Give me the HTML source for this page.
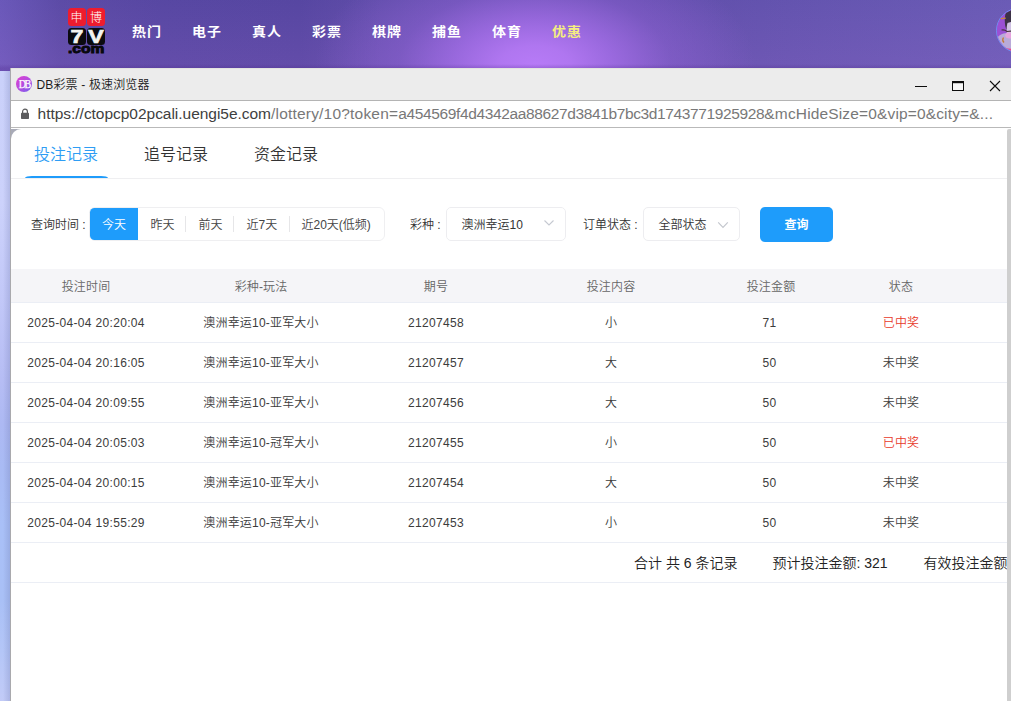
<!DOCTYPE html>
<html lang="zh-CN">
<head>
<meta charset="utf-8">
<title>DB彩票 - 极速浏览器</title>
<style>
*{box-sizing:border-box;margin:0;padding:0}
html,body{width:1011px;height:701px;overflow:hidden;background:#fff}
body{position:relative;font-family:"Liberation Sans","Noto Sans CJK SC",sans-serif;color:#333;font-size:12px;font-weight:350}
.abs{position:absolute;white-space:nowrap}
/* ---------- top site header ---------- */
#hdr{position:absolute;left:0;top:0;width:1011px;height:71px;overflow:hidden;
 background:
  linear-gradient(0deg,rgba(70,30,130,.22) 0px,rgba(70,30,130,.22) 3px,rgba(70,30,130,0) 7px),
  radial-gradient(ellipse 220px 125px at 535px 66px,rgba(183,123,247,1) 0%,rgba(181,121,245,.93) 16%,rgba(172,114,240,.72) 36%,rgba(155,104,226,.38) 62%,rgba(140,95,210,0) 100%),
  linear-gradient(180deg,rgba(20,20,120,.05) 0%,rgba(150,95,200,.16) 100%),
  linear-gradient(90deg,#6f5cbd 0px,#604ea9 60px,#5b4aa5 160px,#5a49a4 300px,#6450ac 380px,#6550ad 640px,#6756b1 760px,#6f5fb9 1011px);}
#hdr .nav{position:absolute;transform:scaleY(.9);top:21px;height:20px;line-height:20px;font-size:14px;font-weight:bold;color:#fff;white-space:nowrap;letter-spacing:1px}
#logo{position:absolute;left:67px;top:8px;width:39px;height:46px}
#logo .r{position:absolute;top:0;width:18px;height:18px;border-radius:3.5px;background:#ee1c2e;color:#fff;font-size:12px;line-height:20.5px;text-align:center;font-weight:300}
#logo .k{position:absolute;top:19.5px;width:18px;height:17.5px;border-radius:3.5px;background:#0b0b10;overflow:hidden}
#logo .k span{display:block;color:#f4f4f0;font-size:19px;line-height:17.5px;text-align:center;font-weight:bold;transform:scaleX(1.22);-webkit-text-stroke:.7px #f4f4f0}
#logo .c{position:absolute;left:1px;top:34px;width:31px;height:13px;font-size:13px;line-height:13px;font-weight:bold;color:#08080c;transform:scaleX(1.2);transform-origin:0 50%;-webkit-text-stroke:.9px #08080c}
#avatar{position:absolute;left:996px;top:8px;width:45px;height:45px;border-radius:50%;border:1px solid #6f8df2;overflow:hidden;
 background:#a254da}
/* ---------- left strip of underlying page ---------- */
#strip{position:absolute;left:0;top:71px;width:10px;height:630px;
 background:linear-gradient(180deg,#cad1fa 0%,#ccd2fb 21%,#c2c8f8 36%,#b6bdf4 49%,#adb9f3 56%,#a9bbf4 63%,#a9c0f7 72%,#a9c0f6 84%,#b4c6f7 92%,#c2cbf7 100%)}
#strip:after{content:"";position:absolute;right:0;top:0;width:7px;height:100%;background:linear-gradient(90deg,rgba(100,110,170,0),rgba(100,110,165,.24))}
/* ---------- popup window chrome ---------- */
#win{position:absolute;left:10px;top:68px;width:1001px;height:633px;background:#fff;overflow:hidden;border-left:1px solid #a9a9ad}
#tbar{position:absolute;left:0;top:0;width:1000px;height:32px;background:#ececec}
#tbar:before{content:"";position:absolute;left:0;top:0;width:100%;height:1px;background:#e4e4e0}
#tbar .ttl{position:absolute;left:25.5px;top:8px;height:18px;line-height:18px;font-size:12px;color:#1c1c1c;letter-spacing:.15px;white-space:nowrap}
#fav{position:absolute;left:5px;top:8px;width:16px;height:16px;border-radius:50%;
 background:linear-gradient(135deg,#e23fd0 0%,#b44de0 50%,#6f62ee 100%);overflow:hidden}
#fav span{position:absolute;left:-1.4px;top:0;width:20px;display:block;color:#fff;font-family:"Liberation Serif",serif;font-size:12px;font-weight:normal;line-height:16.5px;text-align:center;letter-spacing:-1.8px;text-indent:-1.8px;transform:scaleX(.84);-webkit-text-stroke:.25px #fff}
#ubar{position:absolute;left:0;top:32px;width:1000px;height:28px;background:#fff;border-top:1px solid #b4b4b4;border-bottom:1px solid #b9b9b9}
#ubar .url{position:absolute;left:26.6px;top:1px;height:24px;line-height:24px;font-size:15.5px;color:#787878;white-space:nowrap;letter-spacing:.02px}
#ubar .url b{font-weight:normal;color:#404040;letter-spacing:-.03px}
#ubar .ua{letter-spacing:.2px}
#ubar .ub{letter-spacing:-.37px}
#ubar .uc{letter-spacing:.15px}
/* ---------- page content ---------- */
#page{position:absolute;left:0;top:61px;width:996px;overflow:hidden;height:572px;background:#fff;border-top-left-radius:10px}
#in{position:absolute;left:0;top:-61px;width:995px;height:633px}
#pagebg{position:absolute;left:0;top:61px;width:20px;height:20px;background:#a9abb8}
#sbar{position:absolute;left:996px;top:61px;width:4px;height:572px;background:#cfcfcf;border-top-left-radius:2px}
.tab{position:absolute;top:75px;height:24px;line-height:24px;font-size:16px;color:#333;white-space:nowrap}
.tab.on{color:#2e9df4}
#ink{position:absolute;left:13.5px;top:107.7px;width:83.5px;height:2.3px;background:#1f9cfb;border-radius:8px 8px 0 0/2.3px 2.3px 0 0}
#tabline{position:absolute;left:0;top:110px;width:996px;height:1px;background:#efeff1}
.lbl{position:absolute;top:148px;height:18px;line-height:18px;font-size:12px;color:#333;white-space:nowrap}
#grp{position:absolute;left:78px;top:139px;width:296px;height:34px;border:1px solid #efeff1;border-radius:6px;background:#fff}
#grp .it{position:absolute;top:0;height:32px;line-height:34px;font-size:12px;color:#444;white-space:nowrap}
#grp .on{left:0;width:48px;background:#1e9cfb;color:#fff;text-align:center;border-radius:4.5px 0 0 4.5px}
#grp i{position:absolute;top:8px;width:1px;height:16px;background:#e6e6e8}
.sel{position:absolute;top:139px;height:34px;border:1px solid #ededf0;border-radius:5px;background:#fff}
.sel span{position:absolute;left:14.5px;top:0;height:32px;line-height:34px;font-size:12px;color:#333;white-space:nowrap}
.sel svg{position:absolute}
#qbtn{position:absolute;left:749px;top:139px;width:73px;height:35px;border-radius:5px;background:#1e9cfb;color:#fff;font-size:12px;font-weight:bold;line-height:36px;text-align:center}
/* table */
#thead{position:absolute;left:0;top:201px;width:996px;height:34px;background:#f5f5f8;border-bottom:1px solid #ebeef5}
.th,.td{position:absolute;height:20px;line-height:20px;font-size:12px;white-space:nowrap;transform:translateX(-50%);text-align:center}
.th{color:#666;top:208.5px;letter-spacing:.15px}
.td{color:#3c3c3c;letter-spacing:.2px}
.num{letter-spacing:.33px}
.red{color:#e8392b}
.hl{position:absolute;left:0;width:996px;height:1px;background:#ebeef5}
.ft{position:absolute;top:484px;height:22px;line-height:22px;font-size:14px;color:#222;white-space:nowrap}
</style>
</head>
<body>
<div id="hdr">
  <div id="logo">
    <div class="r" style="left:.5px">申</div><div class="r" style="left:20px">博</div>
    <div class="k" style="left:.5px"><span>7</span></div><div class="k" style="left:20px"><span>V</span></div>
    <div class="c">.com</div>
  </div>
  <div class="nav" style="left:132px">热门</div>
  <div class="nav" style="left:192px">电子</div>
  <div class="nav" style="left:252px">真人</div>
  <div class="nav" style="left:312px">彩票</div>
  <div class="nav" style="left:372px">棋牌</div>
  <div class="nav" style="left:432px">捕鱼</div>
  <div class="nav" style="left:492px">体育</div>
  <div class="nav" style="left:552px;color:#f4ee80">优惠</div>
  <div id="avatar"><svg width="45" height="45" viewBox="0 0 45 45" style="position:absolute;left:-1px;top:-1px">
    <rect width="45" height="45" fill="#9a50d4"/>
    <path d="M1 30C4 26 8 25 12 25L20 24V45H3Z" fill="#b9aad9"/>
    <path d="M10 4C12 1 16 0 20 0V22H11C8.5 19 8 10 10 4Z" fill="#3c3247"/>
    <path d="M11.5 15C13 14 16 13.5 20 14V27H11C10.5 23 10.5 18 11.5 15Z" fill="#cfc1e3"/>
    <path d="M4.5 10.6L9.8 10.2" stroke="#c8893c" stroke-width="1.3"/>
    <ellipse cx="13.5" cy="27.5" rx="4.2" ry="3" fill="#e6a3de"/>
    <path d="M5.5 22C8 21.5 10 22.5 11 23.5C13 23 16 23 20 23.5" stroke="#4b3340" stroke-width="1.1" fill="none"/>
    <path d="M7.5 29.5C6.5 31 6.5 33 8 34.5" stroke="#c47a36" stroke-width="1.3" fill="none"/>
    <path d="M6 38C10 41 14 41 20 40.5V45H10Z" fill="#ee428e"/>
  </svg></div>
</div>
<div id="strip"></div>
<div id="win">
  <div id="tbar">
    <div id="fav"><span>DB</span></div>
    <div class="ttl">DB彩票 - 极速浏览器</div>
    <svg class="abs" style="left:895px;top:6px" width="100" height="22" viewBox="0 0 100 22">
      <path d="M9 12.5H21" stroke="#0c0c0c" stroke-width="1.05" fill="none"/>
      <rect x="46.5" y="7.5" width="11" height="9" stroke="#0c0c0c" stroke-width="1" fill="#f6f6f6"/><rect x="46" y="7" width="12" height="2.2" fill="#0c0c0c"/>
      <path d="M84 7L94 17M94 7L84 17" stroke="#0c0c0c" stroke-width="1.1" fill="none"/>
    </svg>
  </div>
  <div id="ubar">
    <svg class="abs" style="left:9px;top:7px" width="10" height="12" viewBox="0 0 10 12"><path d="M2.6 5V3.5a2.4 2.4 0 0 1 4.8 0V5" stroke="#5c5c5e" stroke-width="1.2" fill="none"/><rect x="1" y="4.8" width="8" height="6.2" rx=".7" fill="#5c5c5e"/></svg>
    <div class="url"><b>https://ctopcp02pcali.uengi5e.com</b><span class="ua">/lottery/10?token=</span><span class="ub">a454569f4d4342aa88627d3841b7bc3d1743771925928</span><span class="uc">&amp;mcHideSize=0&amp;vip=0&amp;city=&amp;...</span></div>
  </div>
  <div id="pagebg"></div>
  <div id="page"><div id="in">
    <div class="tab on" style="left:23px">投注记录</div>
    <div class="tab" style="left:133px">追号记录</div>
    <div class="tab" style="left:243px">资金记录</div>
    <div id="tabline"></div>
    <div id="ink"></div>

    <div class="lbl" style="left:20px">查询时间 :</div>
    <div id="grp">
      <div class="it on">今天</div>
      <div class="it" style="left:60.5px">昨天</div><i style="left:95px"></i>
      <div class="it" style="left:108.5px">前天</div><i style="left:143px"></i>
      <div class="it" style="left:156.5px">近7天</div><i style="left:199px"></i>
      <div class="it" style="left:211.5px">近20天(低频)</div>
    </div>
    <div class="lbl" style="left:399px">彩种 :</div>
    <div class="sel" style="left:435px;width:120px"><span>澳洲幸运10</span>
      <svg style="left:96px;top:10.8px" width="12" height="8" viewBox="0 0 12 8"><path d="M1.5 1.5L6 6L10.5 1.5" stroke="#c5c9d1" stroke-width="1.1" fill="none"/></svg></div>
    <div class="lbl" style="left:572px">订单状态 :</div>
    <div class="sel" style="left:632px;width:97px"><span>全部状态</span>
      <svg style="left:72.5px;top:13px" width="12" height="8" viewBox="0 0 12 8"><path d="M1.2 1.3L6 6.4L10.8 1.3" stroke="#c3c6cd" stroke-width="1.1" fill="none"/></svg></div>
    <div id="qbtn">查询</div>

    <div id="thead"></div>
    <div class="th" style="left:75px">投注时间</div>
    <div class="th" style="left:250px">彩种-玩法</div>
    <div class="th" style="left:425px">期号</div>
    <div class="th" style="left:600px">投注内容</div>
    <div class="th" style="left:760px">投注金额</div>
    <div class="th" style="left:890px">状态</div>

    <div class="td num" style="left:75px;top:245px">2025-04-04 20:20:04</div>
    <div class="td" style="left:250px;top:245px">澳洲幸运10-亚军大小</div>
    <div class="td num" style="left:425px;top:245px">21207458</div>
    <div class="td" style="left:600px;top:245px">小</div>
    <div class="td num" style="left:758.5px;top:245px">71</div>
    <div class="td red" style="left:890px;top:245px">已中奖</div>
    <div class="hl" style="top:274px"></div>

    <div class="td num" style="left:75px;top:285px">2025-04-04 20:16:05</div>
    <div class="td" style="left:250px;top:285px">澳洲幸运10-亚军大小</div>
    <div class="td num" style="left:425px;top:285px">21207457</div>
    <div class="td" style="left:600px;top:285px">大</div>
    <div class="td num" style="left:758.5px;top:285px">50</div>
    <div class="td" style="left:890px;top:285px">未中奖</div>
    <div class="hl" style="top:314px"></div>

    <div class="td num" style="left:75px;top:325px">2025-04-04 20:09:55</div>
    <div class="td" style="left:250px;top:325px">澳洲幸运10-亚军大小</div>
    <div class="td num" style="left:425px;top:325px">21207456</div>
    <div class="td" style="left:600px;top:325px">大</div>
    <div class="td num" style="left:758.5px;top:325px">50</div>
    <div class="td" style="left:890px;top:325px">未中奖</div>
    <div class="hl" style="top:354px"></div>

    <div class="td num" style="left:75px;top:365px">2025-04-04 20:05:03</div>
    <div class="td" style="left:250px;top:365px">澳洲幸运10-冠军大小</div>
    <div class="td num" style="left:425px;top:365px">21207455</div>
    <div class="td" style="left:600px;top:365px">小</div>
    <div class="td num" style="left:758.5px;top:365px">50</div>
    <div class="td red" style="left:890px;top:365px">已中奖</div>
    <div class="hl" style="top:394px"></div>

    <div class="td num" style="left:75px;top:405px">2025-04-04 20:00:15</div>
    <div class="td" style="left:250px;top:405px">澳洲幸运10-亚军大小</div>
    <div class="td num" style="left:425px;top:405px">21207454</div>
    <div class="td" style="left:600px;top:405px">大</div>
    <div class="td num" style="left:758.5px;top:405px">50</div>
    <div class="td" style="left:890px;top:405px">未中奖</div>
    <div class="hl" style="top:434px"></div>

    <div class="td num" style="left:75px;top:445px">2025-04-04 19:55:29</div>
    <div class="td" style="left:250px;top:445px">澳洲幸运10-冠军大小</div>
    <div class="td num" style="left:425px;top:445px">21207453</div>
    <div class="td" style="left:600px;top:445px">小</div>
    <div class="td num" style="left:758.5px;top:445px">50</div>
    <div class="td" style="left:890px;top:445px">未中奖</div>
    <div class="hl" style="top:474px"></div>

    <div class="ft" style="left:623px">合计 共 6 条记录</div>
    <div class="ft" style="left:761.5px">预计投注金额: 321</div>
    <div class="ft" style="left:912.5px">有效投注金额: 321</div>
    <div class="hl" style="top:514px"></div>
  </div></div>
  <div id="sbar"></div>
</div>
</body>
</html>
